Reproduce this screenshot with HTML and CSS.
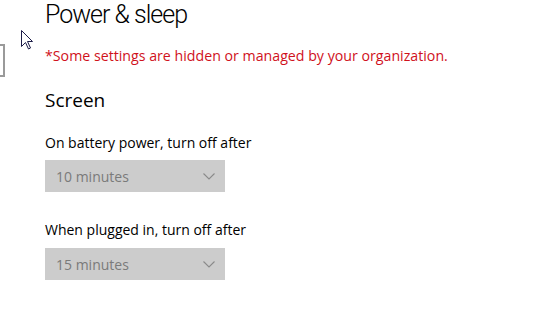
FILE: index.html
```html
<!DOCTYPE html>
<html lang="en">
<head>
    <meta charset="UTF-8">
    <title>Power &amp; sleep</title>
    <link rel="stylesheet" href="styles.css">
</head>
<body>
    <div class="page">
        <!-- 왼쪽 메뉴 끝부분 (잘려서 보임) -->
        <div class="side">
            <div class="side-box"></div>
        </div>

        <div class="main">
            <h1 class="title">Power &amp; sleep</h1>
            <p class="notice">*Some settings are hidden or managed by your organization.</p>

            <h2 class="section">Screen</h2>

            <div class="setting">
                <label class="setting-label">On battery power, turn off after</label>
                <div class="select">
                    <span>10 minutes</span>
                    <svg class="chevron" width="12" height="7" viewBox="0 0 12 7"><path d="M0.5 0.5 L6 6 L11.5 0.5" fill="none" stroke="#8a8a8a" stroke-width="1.1"/></svg>
                </div>
            </div>

            <div class="setting">
                <label class="setting-label">When plugged in, turn off after</label>
                <div class="select">
                    <span>15 minutes</span>
                    <svg class="chevron" width="12" height="7" viewBox="0 0 12 7"><path d="M0.5 0.5 L6 6 L11.5 0.5" fill="none" stroke="#8a8a8a" stroke-width="1.1"/></svg>
                </div>
            </div>
        </div>
    </div>

    <!-- 마우스 커서 -->
    <svg class="cursor" width="14" height="21" viewBox="0 0 14 21">
        <path d="M0.5 0.5 L0.5 16.5 L4.5 12.5 L7.5 19 L9.5 18 L6.5 11.5 L11.5 11.5 Z" fill="#fff" stroke="#1c1c48" stroke-width="1" stroke-linejoin="miter"/>
    </svg>
</body>
</html>
```

FILE: styles.css
```css
* {
    padding: 0;
    margin: 0;
    box-sizing: border-box;
}

body {
    background-color: #fff;
    font-family: "Open Sans", "Noto Sans", sans-serif;
    color: #000;
}

.page {
    display: flex;
}

.side {
    width: 45px;
    flex-shrink: 0;
    padding-top: 44px;
}

.side-box {
    width: 35px;
    height: 33px;
    margin-left: -30px;
    border: 2px solid #9a9a9a;
}

.main {
    display: flex;
    flex-direction: column;
}

.title {
    font-family: "Roboto", "Open Sans", sans-serif;
    font-size: 25px;
    font-weight: 300;
    letter-spacing: -1px;
    line-height: 30px;
}

.notice {
    color: #d0111c;
    font-size: 14.2px;
    line-height: 20px;
    margin-top: 16px;
}

.section {
    font-size: 19px;
    font-weight: 400;
    line-height: 24px;
    margin-top: 22px;
}

.setting {
    display: flex;
    flex-direction: column;
    margin-top: 21px;
}

.setting + .setting {
    margin-top: 28px;
}

.setting-label {
    font-size: 14px;
    line-height: 20px;
}

.select {
    width: 180px;
    height: 32px;
    margin-top: 7px;
    background-color: #cccccc;
    color: #7a7a7a;
    font-size: 14px;
    display: flex;
    align-items: center;
    justify-content: space-between;
    padding: 0 10px 0 11px;
}

.setting + .setting .select {
    margin-top: 8px;
}

.chevron {
    margin-top: 1px;
}

.cursor {
    position: absolute;
    left: 21px;
    top: 30px;
}
```
